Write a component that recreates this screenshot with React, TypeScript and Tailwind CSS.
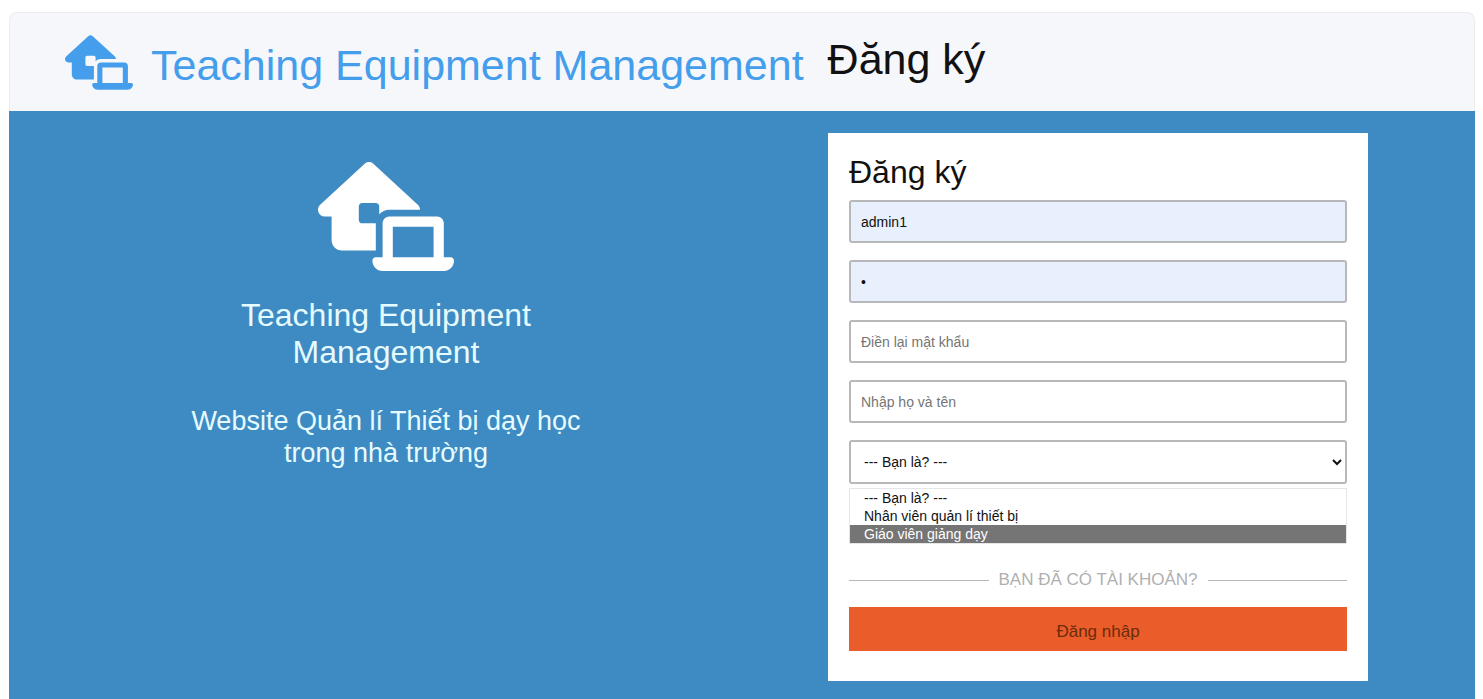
import { useState } from "react";
import { FaHouseLaptop } from "react-icons/fa6";

const ROLES = [
  { value: "", label: "--- Bạn là? ---" },
  { value: "staff", label: "Nhân viên quản lí thiết bị" },
  { value: "teacher", label: "Giáo viên giảng dạy" },
];

const FIELD =
  "block w-full h-[43px] px-[10px] border-2 border-[#b8b8ba] rounded-[3px] text-sm placeholder-[#757575] focus:outline-none focus:border-[#3e8bc3]";

function Header() {
  return (
    <header className="flex items-center h-[99px] pl-[55px] bg-[#f5f7fb] border border-b-0 border-[#ececef] rounded-t-lg">
      <a href="#" className="flex items-center gap-[18px] text-[#459eec]">
        <FaHouseLaptop className="w-[68px] h-[55px]" />
        <span className="pt-1.5 text-[43px] leading-[50px]">
          Teaching Equipment Management
        </span>
      </a>
      <h1 className="ml-6 pb-1.5 text-[43px] leading-[50px] text-[#111]">
        Đăng ký
      </h1>
    </header>
  );
}

function Intro() {
  return (
    <section className="flex-1 flex flex-col items-center pt-[29px] pr-[65px] text-center text-[#e6fbff]">
      <FaHouseLaptop className="w-[136px] h-[109px] text-white" />
      <div className="max-w-[400px]">
        <h2 className="mt-[26px] text-[32px] leading-[37px]">
          Teaching Equipment Management
        </h2>
        <p className="mt-[34px] text-[27px] leading-8">
          Website Quản lí Thiết bị dạy học trong nhà trường
        </p>
      </div>
    </section>
  );
}

function RegisterForm() {
  const [username, setUsername] = useState("admin1");
  const [password, setPassword] = useState("1");
  const [role, setRole] = useState("");
  const [active, setActive] = useState("teacher");

  return (
    <form
      className="w-[540px] shrink-0 px-[21px] pt-[21px] pb-[30px] bg-white text-[#111]"
      onSubmit={(e) => e.preventDefault()}
    >
      <h2 className="mb-[9px] text-[32px] leading-[37px]">Đăng ký</h2>

      <div className="space-y-[17px]">
        <input
          type="text"
          aria-label="Tên đăng nhập"
          value={username}
          onChange={(e) => setUsername(e.target.value)}
          className={`${FIELD} bg-[#e8effd]`}
        />
        <input
          type="password"
          aria-label="Mật khẩu"
          value={password}
          onChange={(e) => setPassword(e.target.value)}
          className={`${FIELD} bg-[#e8effd]`}
        />
        <input
          type="password"
          aria-label="Điền lại mật khẩu"
          placeholder="Điền lại mật khẩu"
          className={FIELD}
        />
        <input
          type="text"
          aria-label="Nhập họ và tên"
          placeholder="Nhập họ và tên"
          className={FIELD}
        />
        <select
          aria-label="Bạn là?"
          value={role}
          onChange={(e) => setRole(e.target.value)}
          className="block w-full h-11 pl-[9px] border-2 border-[#b8b8ba] rounded-[3px] bg-white text-sm focus:outline-none"
        >
          {ROLES.map((r) => (
            <option key={r.value} value={r.value}>
              {r.label}
            </option>
          ))}
        </select>
      </div>

      {/* Open option list */}
      <ul
        role="listbox"
        aria-label="Bạn là?"
        className="mt-1 border border-[#e6e6e6] text-sm leading-[18px]"
      >
        {ROLES.map((r) => (
          <li
            key={r.value}
            role="option"
            aria-selected={active === r.value}
            onMouseEnter={() => setActive(r.value)}
            onClick={() => setRole(r.value)}
            className={`px-[14px] cursor-default ${
              active === r.value ? "bg-[#757575] text-white" : ""
            }`}
          >
            {r.label}
          </li>
        ))}
      </ul>

      <div className="flex items-center gap-[10px] mt-6 text-[17px] leading-6 text-[#b0b0b0]">
        <span className="flex-1 h-px bg-[#b8b8b8]" />
        BẠN ĐÃ CÓ TÀI KHOẢN?
        <span className="flex-1 h-px bg-[#b8b8b8]" />
      </div>

      <button
        type="button"
        className="block w-full h-11 mt-[15px] pt-1.5 bg-[#ea5c2a] text-[17px] text-[#6b2c0a]"
      >
        Đăng nhập
      </button>
    </form>
  );
}

export default function App() {
  return (
    <div className="min-h-screen flex flex-col pt-3 pl-[9px] pr-2 bg-white font-['Liberation_Sans',Arial,sans-serif]">
      <Header />
      <main className="flex-1 flex items-start pt-[22px] pb-[18px] pr-[107px] bg-[#3e8bc3]">
        <Intro />
        <RegisterForm />
      </main>
    </div>
  );
}
